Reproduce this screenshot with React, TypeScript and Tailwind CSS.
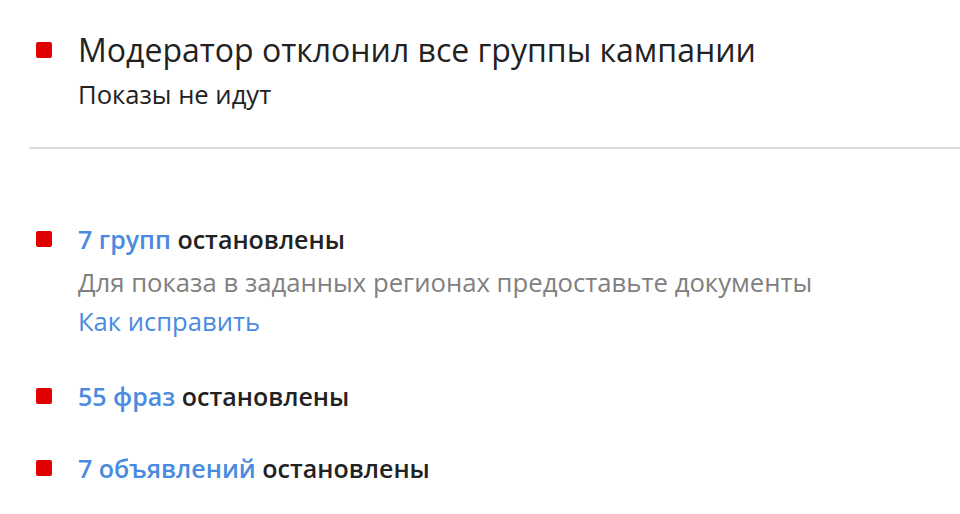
import React from "react";

const Square = () => <span className="block w-4 h-4 bg-[#e00000] rounded-[2px] shrink-0" />;

export default function App() {
  return (
    <div className="w-[960px] h-[514px] bg-white overflow-hidden" style={{ fontFamily: '"Open Sans", "Noto Sans", sans-serif' }}>
      <div className="pl-9 pt-[30px]">
        <div className="flex items-center gap-[26px] h-[40px]">
          <Square />
          <div className="text-[32px] text-[#222] leading-[40px] whitespace-nowrap">Модератор отклонил все группы кампании</div>
        </div>
        <div className="pl-[42px] text-[25.6px] text-[#222] leading-[30px] mt-[10px] whitespace-nowrap">Показы не идут</div>
      </div>
      <div className="ml-[29px] mt-[37px] h-[2px] bg-[#dcdcdc]" />
      <div className="pl-9 pt-[74px]">
        <div className="flex items-center gap-[26px] h-[32px]">
          <Square />
          <div className="text-[25px] font-semibold leading-[32px] text-[#222] whitespace-nowrap">
            <span className="text-[#4a8be0]">7 групп</span> остановлены
          </div>
        </div>
        <div className="pl-[42px] mt-[12px] text-[25.7px] leading-[32px] text-[#808080] whitespace-nowrap">Для показа в заданных регионах предоставьте документы</div>
        <div className="pl-[42px] mt-[7px] text-[25.6px] leading-[32px] text-[#4a8be0] whitespace-nowrap">Как исправить</div>
        <div className="flex items-center gap-[26px] h-[32px] mt-[42px]">
          <Square />
          <div className="text-[25px] font-semibold leading-[32px] text-[#222] whitespace-nowrap">
            <span className="text-[#4a8be0]">55 фраз</span> остановлены
          </div>
        </div>
        <div className="flex items-center gap-[26px] h-[32px] mt-[40px]">
          <Square />
          <div className="text-[25px] font-semibold leading-[32px] text-[#222] whitespace-nowrap">
            <span className="text-[#4a8be0]">7 объявлений</span> остановлены
          </div>
        </div>
      </div>
    </div>
  );
}
